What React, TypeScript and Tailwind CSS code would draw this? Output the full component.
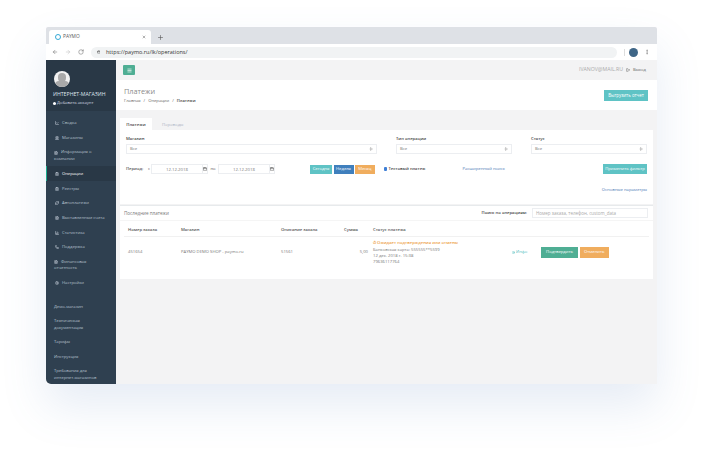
import React from 'react';
import {
  ArrowLeft,
  ArrowRight,
  Calendar,
  ChevronsUpDown,
  ClipboardList,
  FileText,
  Info,
  Landmark,
  LineChart,
  LogOut,
  Menu,
  Phone,
  Plus,
  RefreshCw,
  RotateCw,
  Settings,
  BarChart3,
  Lock,
  MoreVertical,
  X,
} from 'lucide-react';

type NavItem = {
  label: string[];
  icon?: React.ElementType;
  active?: boolean;
};

const mainNav: NavItem[] = [
  { label: ['Сводка'], icon: LineChart },
  { label: ['Магазины'], icon: Landmark },
  { label: ['Информация о', 'компании'], icon: FileText },
  { label: ['Операции'], icon: ClipboardList, active: true },
  { label: ['Реестры'], icon: ClipboardList },
  { label: ['Автоплатежи'], icon: RefreshCw },
  { label: ['Выставленные счета'], icon: FileText },
  { label: ['Статистика'], icon: BarChart3 },
  { label: ['Поддержка'], icon: Phone },
  { label: ['Финансовая', 'отчетность'], icon: FileText },
  { label: ['Настройки'], icon: Settings },
];

const docNav: string[][] = [
  ['Демо-магазин'],
  ['Техническая', 'документация'],
  ['Тарифы'],
  ['Инструкция'],
  ['Требования для', 'интернет-магазинов'],
];

const SideLink = ({ item }: { item: NavItem }) => {
  const Icon = item.icon;
  if (item.label.length > 1) {
    return (
      <div className="py-[4px] pl-[8px] pr-2 text-[4.2px] leading-[6.5px] text-[#b7c0cf]">
        <div className="flex items-center gap-[3px]">
          {Icon && <Icon className="w-[4px] h-[4px] text-[#c3cad6]" strokeWidth={3} />}
          <span>{item.label[0]}</span>
        </div>
        <div>{item.label[1]}</div>
      </div>
    );
  }
  return (
    <div
      className={
        item.active
          ? 'flex items-center gap-[3px] h-[15px] pl-[8px] bg-[#293846] border-l-[1px] border-[#19aa8d] text-[4.2px] text-white'
          : 'flex items-center gap-[3px] h-[14.7px] pl-[9px] text-[4.2px] text-[#b7c0cf]'
      }
    >
      {Icon && <Icon className="w-[4px] h-[4px] text-[#c3cad6]" strokeWidth={3} />}
      <span>{item.label[0]}</span>
    </div>
  );
};

const Sidebar = () => (
  <aside className="w-[70px] shrink-0 bg-[#2f4050] rounded-bl-[5px] overflow-hidden">
    <div className="h-[51px] bg-[#293846] pl-[8px] pt-[11px]">
      <div className="w-[16px] h-[16px] rounded-full bg-[#f2f2f2] overflow-hidden flex flex-col items-center">
        <div className="w-[8px] h-[9px] mt-[2px] rounded-full bg-[#a9a9a9] shrink-0" />
        <div className="w-[14px] h-[8px] -mt-[1px] rounded-full bg-[#a9a9a9] shrink-0" />
      </div>
      <div className="mt-[4px] ml-[-1px] text-[5.2px] leading-[7px] text-[#dfe4ed] whitespace-nowrap">ИНТЕРНЕТ-МАГАЗИН</div>
      <div className="mt-[2px] ml-[-1px] flex items-center gap-[1px] text-[4.2px] leading-[6px] text-[#d5dae3] whitespace-nowrap">
        <span className="w-[3px] h-[3px] rounded-full bg-white" />
        Добавить аккаунт
      </div>
    </div>
    <nav className="pt-[5px]">
      {mainNav.map((item) => (
        <SideLink key={item.label[0]} item={item} />
      ))}
    </nav>
    <div className="mt-[9px] pl-[8px] text-[4.2px] leading-[6.5px] text-[#b7c0cf]">
      {docNav.map((lines) => (
        <div key={lines[0]} className="py-[4px]">
          {lines.map((line) => (
            <div key={line} className="whitespace-nowrap">{line}</div>
          ))}
        </div>
      ))}
    </div>
  </aside>
);

const SelectField = ({ label, width }: { label: string; width: string }) => (
  <div className={width}>
    <div className="text-[4.2px] leading-[6px] font-semibold text-[#444]">{label}</div>
    <div className="mt-[2px] h-[10px] border border-[#eceef1] flex items-center justify-between px-[3px] text-[4.2px] text-[#777]">
      <span>Все</span>
      <ChevronsUpDown className="w-[4px] h-[4px] text-[#555]" strokeWidth={3} />
    </div>
  </div>
);

const DateField = () => (
  <div className="flex h-[10px] border border-[#eceef1]">
    <div className="w-[50px] flex items-center justify-center text-[4.3px] text-[#777]">12.12.2018</div>
    <div className="w-[5px] flex items-center justify-center border-l border-[#eceef1]">
      <Calendar className="w-[4px] h-[4px] text-[#666]" strokeWidth={3} />
    </div>
  </div>
);

const Browser = () => (
  <>
    <div className="h-[17px] bg-[#dee1e6] flex items-end pl-[3px] rounded-t-[2px]">
      <div className="w-[102px] h-[14px] bg-white rounded-t-[3px] flex items-center pl-[6px] pr-[5px] text-[4.8px] text-[#555]">
        <span className="w-[6px] h-[6px] rounded-full border-[1.5px] border-[#35a9d6] mr-[2px]" />
        <span className="flex-1">PAYMO</span>
        <X className="w-[4px] h-[4px] text-[#666]" strokeWidth={3} />
      </div>
      <Plus className="w-[7px] h-[7px] ml-[6px] mb-[3px] text-[#555]" strokeWidth={2} />
    </div>
    <div className="h-[16px] bg-white flex items-center pl-[6px]">
      <ArrowLeft className="w-[6px] h-[6px] text-[#666]" strokeWidth={2} />
      <ArrowRight className="w-[6px] h-[6px] ml-[7px] text-[#bbb]" strokeWidth={2} />
      <RotateCw className="w-[6px] h-[6px] ml-[7px] text-[#666]" strokeWidth={2} />
      <div className="ml-[7px] w-[526px] h-[11px] rounded-full bg-[#f1f3f4] flex items-center pl-[5.5px] text-[5.5px] text-[#333]">
        <Lock className="w-[3.5px] h-[3.5px] mr-[6px] text-[#555]" strokeWidth={3} />
        https://paymo.ru/lk/operations/
      </div>
      <div className="ml-[7px] w-px h-[7px] bg-[#ddd]" />
      <div className="ml-[4px] w-[9px] h-[9px] rounded-full bg-[#3f6687]" />
      <MoreVertical className="w-[6px] h-[6px] ml-[6px] text-[#666]" strokeWidth={2} />
    </div>
  </>
);

const FilterCard = () => (
  <div className="bg-white h-[74px] px-[6px] pt-[6px]">
    <div className="flex gap-[19px]">
      <SelectField label="Магазин" width="w-[251px]" />
      <SelectField label="Тип операции" width="w-[116px]" />
      <SelectField label="Статус" width="w-[116px]" />
    </div>
    <div className="mt-[10px] flex items-center text-[4.2px] text-[#555]">
      <span className="w-[22px] font-semibold">Период:</span>
      <span className="w-[3px]">с</span>
      <DateField />
      <span className="w-[10px] text-center">по</span>
      <DateField />
      <div className="ml-[35px] flex gap-[1.5px] text-white">
        <span className="w-[22px] h-[9px] flex items-center justify-center bg-[#5fc3c5]">Сегодня</span>
        <span className="w-[20px] h-[9px] flex items-center justify-center bg-[#3f7fbd]">Неделя</span>
        <span className="w-[19.5px] h-[9px] flex items-center justify-center bg-[#f0ad5e]">Месяц</span>
      </div>
      <span className="ml-[9px] w-[3.5px] h-[3.5px] bg-[#3f7fd6] rounded-[1px]" />
      <span className="ml-[1.5px] w-[39px] font-semibold text-[#444] whitespace-nowrap">Тестовый платеж</span>
      <span className="ml-[35px] text-[#4a78b5]">Расширенный поиск</span>
      <span className="ml-auto w-[44px] h-[10px] flex items-center justify-center bg-[#5fc3c5] text-white whitespace-nowrap">Применить фильтр</span>
    </div>
    <div className="mt-[13px] text-right text-[4.2px] leading-[6px] text-[#4a78b5]">Основные параметры</div>
  </div>
);

const PaymentsCard = () => (
  <div className="mt-[1px] bg-white h-[74px] border-t border-[#e7eaec]">
    <div className="h-[15px] flex items-center pl-[4px] pr-[5px] text-[4.6px] text-[#777] border-b border-[#f5f5f5]">
      <span>Последние платежи</span>
      <span className="ml-auto font-semibold text-[4.2px] text-[#444]">Поиск по операциям:</span>
      <div className="ml-[5px] w-[116px] h-[10px] border border-[#eceef1] flex items-center pl-[3px] text-[4.5px] text-[#aaa]">
        Номер заказа, телефон, custom_data
      </div>
    </div>
    <div className="mx-[4px] h-[16px] pb-[3px] flex items-end text-[4.2px] leading-[6px] font-semibold text-[#555] border-b border-[#f1f1f1]">
      <span className="pl-[4px] w-[57px]">Номер заказа</span>
      <span className="w-[100px]">Магазин</span>
      <span className="w-[63px]">Описание заказа</span>
      <span className="w-[29px]">Сумма</span>
      <span>Статус платежа</span>
    </div>
    <div className="mx-[4px] flex items-center text-[4.2px] text-[#777] pt-[3px]">
      <span className="pl-[4px] w-[57px]">451654</span>
      <span className="w-[100px]">PAYMO DEMO SHOP - paymo.ru</span>
      <span className="w-[63px]">51561</span>
      <span className="w-[24px] text-right mr-[5px]">5,00</span>
      <div className="w-[139px] leading-[5.8px]">
        <div className="font-semibold text-[#eda148] mb-[1.5px]">⏱ Ожидает подтверждения или отмены</div>
        <div>Банковская карта: 555555**5599</div>
        <div>12 дек. 2018 г. 15:38</div>
        <div>79636117764</div>
      </div>
      <span className="w-[29px] text-[#4fbcbe] flex items-center gap-[1px]">
        <Info className="w-[3px] h-[3px]" strokeWidth={3} />
        Инфо
      </span>
      <span className="w-[37px] h-[11px] flex items-center justify-center bg-[#4fae94] text-white">Подтвердить</span>
      <span className="ml-[1.5px] w-[29.5px] h-[11px] flex items-center justify-center bg-[#f0ad5e] text-white">Отменить</span>
    </div>
  </div>
);

export default function App() {
  return (
    <div className="w-[705px] h-[454px] bg-white overflow-hidden pl-[46px] pt-[27px] font-['Open_Sans',sans-serif]">
      <div className="w-[611px] h-[357px] flex flex-col rounded-[3px] shadow-[0_22px_45px_rgba(90,125,190,0.15)]">
        <Browser />
        <div className="flex flex-1 min-h-0">
          <Sidebar />
          <main className="flex-1 bg-[#f3f3f4] min-w-0">
            <div className="h-[20px] flex items-center pl-[7px] pr-[11px]">
              <span className="w-[12px] h-[10px] bg-[#4fae94] rounded-[1px] flex items-center justify-center">
                <Menu className="w-[5px] h-[5px] text-white" strokeWidth={3} />
              </span>
              <span className="ml-auto text-[5.2px] text-[#aaa]">IVANOV@MAIL.RU</span>
              <LogOut className="ml-[3px] w-[4px] h-[4px] text-[#777]" strokeWidth={3} />
              <span className="ml-[3px] text-[4.2px] text-[#666]">Выход</span>
            </div>
            <div className="h-[30px] bg-white flex items-center pl-[8px] pr-[9px]">
              <div>
                <div className="text-[7.3px] leading-[10px] text-[#8a8a8a]">Платежи</div>
                <div className="mt-[2px] text-[4.2px] leading-[6px] text-[#666]">
                  Главная<span className="mx-[3px]">/</span>Операции<span className="mx-[3px]">/</span>
                  <span className="font-semibold text-[#444]">Платежи</span>
                </div>
              </div>
              <span className="ml-auto w-[44px] h-[11px] flex items-center justify-center bg-[#5fc3c5] text-white text-[4.4px]">Выгрузить отчет</span>
            </div>
            <div className="pl-[4px] pr-[4px] pt-[8px]">
              <div className="flex h-[12px] text-[4.3px]">
                <span className="w-[32px] bg-white flex items-center justify-center font-semibold text-[#444]">Платежи</span>
                <span className="ml-[10px] flex items-center text-[#aab2c2]">Переводы</span>
              </div>
              <FilterCard />
              <PaymentsCard />
            </div>
          </main>
        </div>
      </div>
    </div>
  );
}
